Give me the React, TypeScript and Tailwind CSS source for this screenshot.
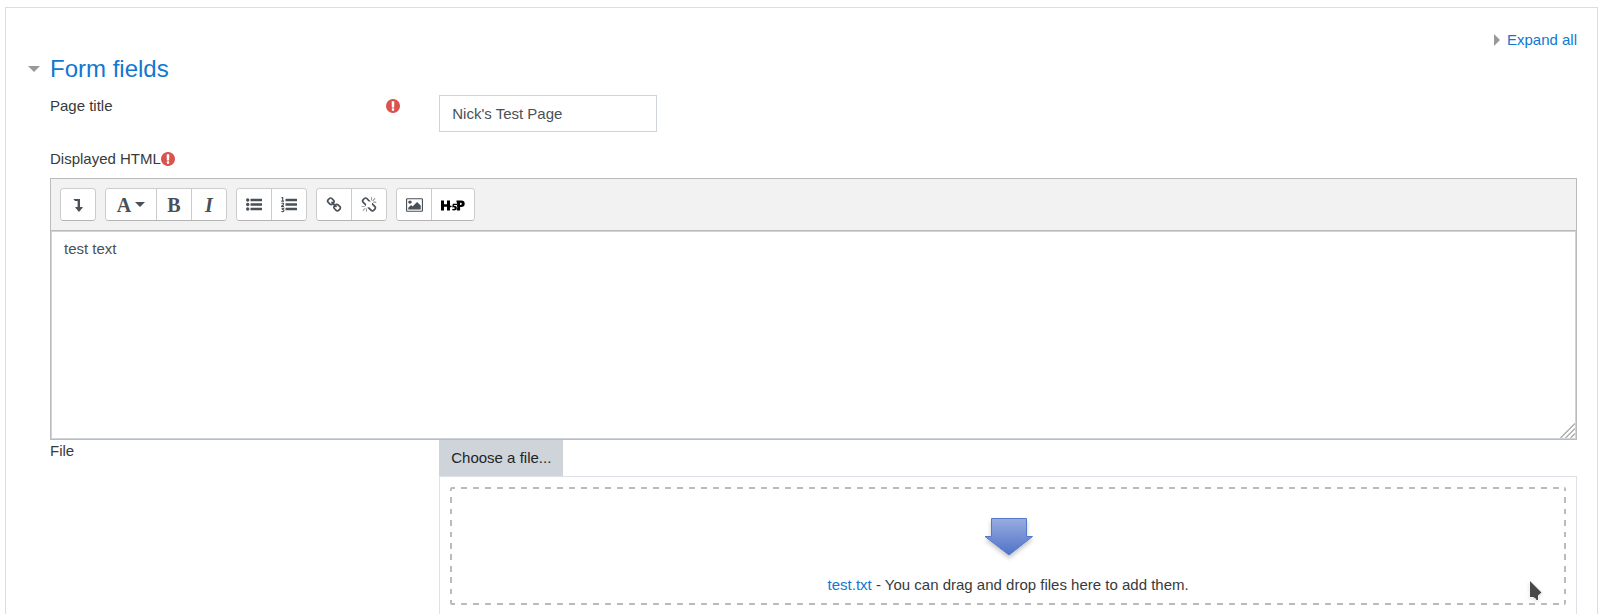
import { useState, type ReactNode } from "react";

function Glyph({ d, box = "0 0 1792 1792", className }: { d: string; box?: string; className: string }) {
  return (
    <svg viewBox={box} className={className} fill="currentColor" aria-hidden="true">
      <path d={d} />
    </svg>
  );
}

const EXCLAMATION =
  "M896 128q209 0 385.5 103t279.5 279.5 103 385.5-103 385.5-279.5 279.5-385.5 103-385.5-103-279.5-279.5-103-385.5 103-385.5 279.5-279.5 385.5-103zm128 1247v-190q0-14-9-23.5t-22-9.5h-192q-13 0-23 10t-10 23v190q0 13 10 23t23 10h192q13 0 22-9.5t9-23.5zm-2-344l18-621q0-12-10-18-10-8-24-8h-220q-14 0-24 8-10 6-10 18l17 621q0 10 10 17.5t24 7.5h185q14 0 23.5-7.5t10.5-17.5z";
const LINK =
  "M1520 1216q0-40-28-68l-208-208q-28-28-68-28-42 0-72 32 3 3 19 18.5t21.5 21.5 15 19 13 25.5 3.5 27.5q0 40-28 68t-68 28q-15 0-27.5-3.5t-25.5-13-19-15-21.5-21.5-18.5-19q-33 31-33 73 0 40 28 68l206 207q27 27 68 27 40 0 68-26l147-146q28-28 28-67zm-703-705q0-40-28-68l-206-207q-28-28-68-28-39 0-68 27l-147 146q-28 28-28 67 0 40 28 68l208 208q27 27 68 27 42 0 72-31-3-3-19-18.5t-21.5-21.5-15-19-13-25.5-3.5-27.5q0-40 28-68t68-28q15 0 27.5 3.5t25.5 13 19 15 21.5 21.5 18.5 19q33-31 33-73zm895 705q0 120-85 203l-147 146q-83 83-203 83-121 0-204-85l-206-207q-83-83-83-203 0-123 88-209l-88-88q-86 88-208 88-120 0-204-84l-208-208q-84-84-84-204t85-203l147-146q83-83 203-83 121 0 204 85l206 207q83 83 83 203 0 123-88 209l88 88q86-88 208-88 120 0 204 84l208 208q84 84 84 204z";
const UNLINK =
  "M503 1271l-256 256q-10 9-23 9-12 0-23-9-9-10-9-23t9-23l256-256q10-9 23-9t23 9q9 10 9 23t-9 23zm169 41v320q0 14-9 23t-23 9-23-9-9-23v-320q0-14 9-23t23-9 23 9 9 23zm-224-224q0 14-9 23t-23 9h-320q-14 0-23-9t-9-23 9-23 23-9h320q14 0 23 9t9 23zm1264 128q0 120-85 203l-147 146q-83 83-203 83-121 0-204-85l-334-335q-21-21-42-56l239-18 273 274q28 28 68 27.5t68-27.5l147-146q28-28 28-67 0-40-28-68l-274-275 18-239q35 21 56 42l336 336q84 86 84 204zm-617-724l-239 18-273-274q-28-28-68-28-39 0-68 27l-147 146q-28 28-28 67 0 40 28 68l274 274-18 240q-35-21-56-42l-336-336q-84-86-84-204 0-120 85-203l147-146q83-83 203-83 121 0 204 85l334 335q21 21 42 56zm633 84q0 14-9 23t-23 9h-320q-14 0-23-9t-9-23 9-23 23-9h320q14 0 23 9t9 23zm-544-544v320q0 14-9 23t-23 9-23-9-9-23v-320q0-14 9-23t23-9 23 9 9 23zm407 151l-256 256q-11 9-23 9t-23-9q-9-10-9-23t9-23l256-256q10-9 23-9t23 9q9 10 9 23t-9 23z";
const PICTURE =
  "M576 576q0 80-56 136t-136 56-136-56-56-136 56-136 136-56 136 56 56 136zm1024 384v448h-1408v-192l320-320 160 160 512-512zm96-704h-1600q-13 0-22.5 9.5t-9.5 22.5v1216q0 13 9.5 22.5t22.5 9.5h1600q13 0 22.5-9.5t9.5-22.5v-1216q0-13-9.5-22.5t-22.5-9.5zm160 32v1216q0 66-47 113t-113 47h-1600q-66 0-113-47t-47-113v-1216q0-66 47-113t113-47h1600q66 0 113 47t47 113z";

function Required() {
  return <Glyph d={EXCLAMATION} box="128 128 1536 1536" className="size-3.5 shrink-0 text-[#d9534f]" />;
}

function ToolGroup({ children }: { children: ReactNode }) {
  return (
    <div className="flex divide-x divide-[#ccc] overflow-hidden rounded border border-[#ccc] border-b-[#b3b3b3] bg-white">
      {children}
    </div>
  );
}

function Tool({ label, wide, children }: { label: string; wide?: "menu" | "logo"; children: ReactNode }) {
  const width = wide === "menu" ? "w-[50px]" : wide === "logo" ? "w-[42px]" : "w-[34px]";
  return (
    <button
      type="button"
      aria-label={label}
      className={`${width} box-content flex h-[31px] items-center justify-center bg-white text-[#495057]`}
    >
      {children}
    </button>
  );
}

function BulletList() {
  return (
    <svg viewBox="0 0 16 14" className="h-3.5 w-4" fill="currentColor" aria-hidden="true">
      {[2, 6.5, 11].map((y) => (
        <g key={y}>
          <circle cx="1.7" cy={y} r="1.7" />
          <rect x="4.5" y={y - 1.2} width="11.5" height="2.4" rx="0.3" />
        </g>
      ))}
    </svg>
  );
}

function NumberList() {
  return (
    <svg viewBox="0 0 16 16" className="size-4" fill="currentColor" aria-hidden="true">
      {[1.800, 6.300, 10.800].map((y) => (
        <rect key={y} x="4.5" y={y} width="11.5" height="2.400" rx="0.3" />
      ))}
      <path
        d="M.5 1.1 1.700.4v3.600M.3 4.100h2.800M.5 6.500q1-1 2 0 .4.800-.8 1.700L.5 9.400h2.500M.5 11.200h2.200l-1 1.300q1.300 0 1.300 1t-1.300 1.100q-.7 0-1.300-.5"
        fill="none"
        stroke="currentColor"
        strokeWidth="1.1"
      />
    </svg>
  );
}

function H5PLogo() {
  return (
    <svg viewBox="0 0 24 12" className="h-3 w-6" fill="#000" aria-hidden="true">
      <path d="M0 1.500h3v3.700h3V1.500h3v5.300h2.200L10 8.300H9v3.200H6V7.700H3v3.800H0z" />
      <path d="M11.800 4.800h4.200v1.200h-3.100v.8q2.600-.2 3 1.700-.1 2.800-3 3l-2-.6.900-1.100q1.900.5 2-.9-.2-1-2.600-.5z" />
      <path
        fillRule="evenodd"
        d="M15.500 1.500h4.700q3.500 0 3.500 3.200 0 3.300-3.700 3.300h-.9v3.500h-3.100l-.4-1.200q1.400-1.600.3-3.400l.2-.5V3.600h-.6zm3.600 2.200v2.200h.7q1 0 1-1.100t-1-1.100z"
      />
    </svg>
  );
}

function DropArrow() {
  return (
    <svg viewBox="0 0 54 48" className="h-12 w-[54px] overflow-visible" aria-hidden="true">
      <defs>
        <linearGradient id="arrow-fill" x1="0" y1="0" x2="0" y2="1">
          <stop offset="0" stopColor="#98addf" />
          <stop offset="1" stopColor="#4f72c8" />
        </linearGradient>
        <filter id="arrow-shadow" x="-20%" y="-20%" width="140%" height="150%">
          <feDropShadow dx="0" dy="3" stdDeviation="2" floodColor="#000" floodOpacity="0.22" />
        </filter>
      </defs>
      <path
        d="M10.500 1.500h35v18h6L28 38 4 19.500h6.500z"
        fill="url(#arrow-fill)"
        stroke="#5578cb"
        filter="url(#arrow-shadow)"
      />
    </svg>
  );
}

function Pointer() {
  return (
    <svg viewBox="0 0 16 24" className="absolute right-[22px] bottom-0.5 h-6 w-4 drop-shadow" aria-hidden="true">
      <path d="M2 2v16h3.200l2.500 1.500.800 1.500h1.500v-4.500l3.500-3z" fill="#484848" stroke="#fff" strokeWidth="1" paintOrder="stroke" />
    </svg>
  );
}

export default function App() {
  const [title, setTitle] = useState("Nick's Test Page");
  const [html, setHtml] = useState("test text");
  return (
    <main className="h-screen overflow-hidden bg-white px-[5px] pt-[7px] font-['Liberation_Sans',Arial,sans-serif] text-[15px] leading-[22px] text-[#373a3c]">
      <form className="min-h-full border border-[#ddd] pt-[21px] pr-5 pl-11">
        <div className="flex justify-end">
          <a href="#expand" className="flex items-center gap-[7px] text-[#1177d1]">
            <svg viewBox="0 0 6 12" className="h-3 w-1.5" fill="#999" aria-hidden="true">
              <path d="M0 0 6 6 0 12z" />
            </svg>
            Expand all
          </a>
        </div>

        <h3 className="-ml-[22px] text-2xl leading-9">
          <a href="#form-fields" className="flex items-center gap-2.5 text-[#1177d1]">
            <svg viewBox="0 0 12 6" className="h-1.5 w-3" fill="#999" aria-hidden="true">
              <path d="M0 0H12L6 6z" />
            </svg>
            Form fields
          </a>
        </h3>

        <div className="-mx-[15px] flex items-start pt-2">
          <div className="flex w-1/4 items-center justify-between pr-6 pl-[15px]">
            <label htmlFor="page-title">Page title</label>
            <Required />
          </div>
          <div className="w-3/4 px-[15px]">
            <input
              id="page-title"
              value={title}
              onChange={(e) => setTitle(e.target.value)}
              className="block h-[37px] w-[218px] border border-[#ced4da] px-3 text-[#495057] outline-none"
            />
          </div>
        </div>

        <div className="flex items-center pt-4 pb-2">
          <label htmlFor="displayed-html">Displayed HTML</label>
          <Required />
        </div>

        <div className="border border-[#bbb]">
          <div className="flex gap-[9px] bg-[#f2f2f2] p-[9px]" role="toolbar" aria-label="Editor">
            <ToolGroup>
              <Tool label="Show more buttons">
                <svg viewBox="0 0 10 14" className="h-3.5 w-2.5" fill="currentColor" aria-hidden="true">
                  <path d="M.4 1H7v8h2.400q.5.200.2.700L6.400 13.500q-.4.400-.8 0L2.400 9.700q-.3-.5.2-.7h2V3H2z" />
                </svg>
              </Tool>
            </ToolGroup>
            <ToolGroup>
              <Tool label="Paragraph styles" wide="menu">
                <span className="flex items-center gap-1 font-['Liberation_Serif',serif] text-xl font-bold">
                  A
                  <svg viewBox="0 0 10 5" className="h-[5px] w-2.5" fill="currentColor" aria-hidden="true">
                    <path d="M0 0H10L5 5z" />
                  </svg>
                </span>
              </Tool>
              <Tool label="Bold">
                <span className="font-['Liberation_Serif',serif] text-xl font-bold">B</span>
              </Tool>
              <Tool label="Italic">
                <span className="font-['Liberation_Serif',serif] text-xl font-bold italic">I</span>
              </Tool>
            </ToolGroup>
            <ToolGroup>
              <Tool label="Unordered list">
                <BulletList />
              </Tool>
              <Tool label="Ordered list">
                <NumberList />
              </Tool>
            </ToolGroup>
            <ToolGroup>
              <Tool label="Link">
                <Glyph d={LINK} className="size-4" />
              </Tool>
              <Tool label="Unlink">
                <Glyph d={UNLINK} className="size-4" />
              </Tool>
            </ToolGroup>
            <ToolGroup>
              <Tool label="Insert image">
                <Glyph d={PICTURE} box="-64 0 1920 1792" className="h-4 w-[17px]" />
              </Tool>
              <Tool label="Insert H5P" wide="logo">
                <H5PLogo />
              </Tool>
            </ToolGroup>
          </div>
          <div className="relative border-t border-[#bbb]">
            <textarea
              id="displayed-html"
              value={html}
              onChange={(e) => setHtml(e.target.value)}
              className="block h-[208px] w-full resize-none border border-[#ced4da] px-3 py-1.5 text-[#495057] outline-none"
            />
            <svg viewBox="0 0 15 15" className="absolute right-px bottom-px size-[15px]" stroke="#aaa" strokeWidth="1.3" aria-hidden="true">
              <path d="M.5 15 15 .5M5.500 15 15 5.500M10.500 15 15 10.500" />
            </svg>
          </div>
        </div>

        <div className="-mx-[15px] flex">
          <div className="w-1/4 px-[15px]">
            <span id="file-label">File</span>
          </div>
          <div className="w-3/4 px-[15px]" role="group" aria-labelledby="file-label">
            <button type="button" className="block h-9 bg-[#ced4da] px-3 text-[#212529]">
              Choose a file...
            </button>
            <div className="border border-[#dee2e6] p-2.5 pb-12">
              <div className="relative flex flex-col items-center rounded-xs bg-[image:repeating-linear-gradient(90deg,#bbb_0_5px,transparent_5px_11px,#bbb_11px_12px),repeating-linear-gradient(90deg,#bbb_0_5px,transparent_5px_11px,#bbb_11px_12px),repeating-linear-gradient(180deg,#bbb_0_3.8%,transparent_3.8%_8.7%,#bbb_8.7%_9.7%),repeating-linear-gradient(180deg,#bbb_0_3.8%,transparent_3.8%_8.7%,#bbb_8.7%_9.7%)] bg-[length:100%_2px,100%_2px,2px_100%,2px_100%] bg-[position:left_top,left_bottom,left_top,right_top] bg-no-repeat pt-[30px] pb-[9px]">
                <DropArrow />
                <p className="pt-[9px]">
                  <a href="#test-txt" className="text-[#1177d1]">
                    test.txt
                  </a>{" "}
                  - You can drag and drop files here to add them.
                </p>
                <Pointer />
              </div>
            </div>
          </div>
        </div>
      </form>
    </main>
  );
}
